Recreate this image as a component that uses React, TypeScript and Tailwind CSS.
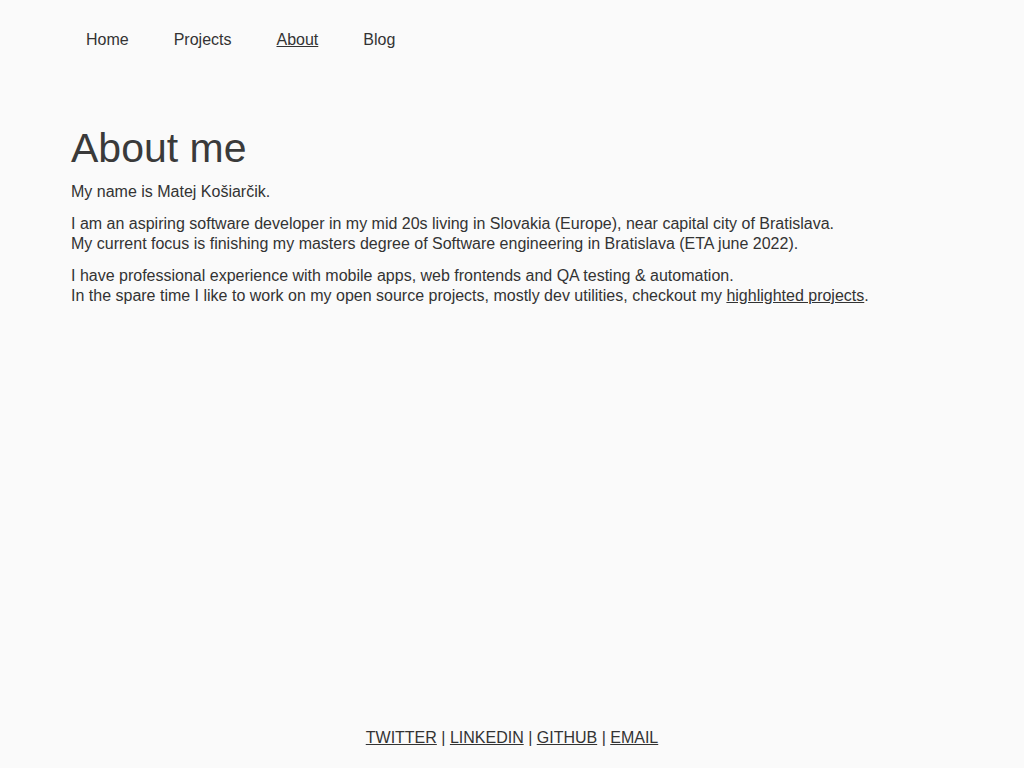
const NAV_ITEMS = [
  { label: 'Home', active: false },
  { label: 'Projects', active: false },
  { label: 'About', active: true },
  { label: 'Blog', active: false },
];

const SOCIALS = ['TWITTER', 'LINKEDIN', 'GITHUB', 'EMAIL'];

export default function App() {
  return (
    <div className="min-h-screen flex flex-col bg-[#fafafa] text-[#333] font-['Liberation_Sans',Arial,sans-serif] text-[16px] leading-[20px]">
      {/* Top nav */}
      <nav className="flex gap-[45px] pl-[86px] pt-[30px]">
        {NAV_ITEMS.map((item) => (
          <a key={item.label} href="#" className={item.active ? 'underline' : ''}>
            {item.label}
          </a>
        ))}
      </nav>

      {/* Content */}
      <main className="flex-1 px-[71px] pt-[77px]">
        <h1 className="text-[41px] leading-[42px] font-normal text-[#3a3a3a] mb-[13px]">About me</h1>
        <p className="mb-[12px]">My name is Matej Košiarčik.</p>
        <p className="mb-[12px]">
          I am an aspiring software developer in my mid 20s living in Slovakia (Europe), near capital city of Bratislava.
          <br />
          My current focus is finishing my masters degree of Software engineering in Bratislava (ETA june 2022).
        </p>
        <p>
          I have professional experience with mobile apps, web frontends and QA testing &amp; automation.
          <br />
          In the spare time I like to work on my open source projects, mostly dev utilities, checkout my{' '}
          <a href="#" className="underline">highlighted projects</a>.
        </p>
      </main>

      {/* Footer */}
      <footer className="text-center pb-[20px]">
        {SOCIALS.map((s, i) => (
          <span key={s}>
            {i > 0 && ' | '}
            <a href="#" className="underline">{s}</a>
          </span>
        ))}
      </footer>
    </div>
  );
}
